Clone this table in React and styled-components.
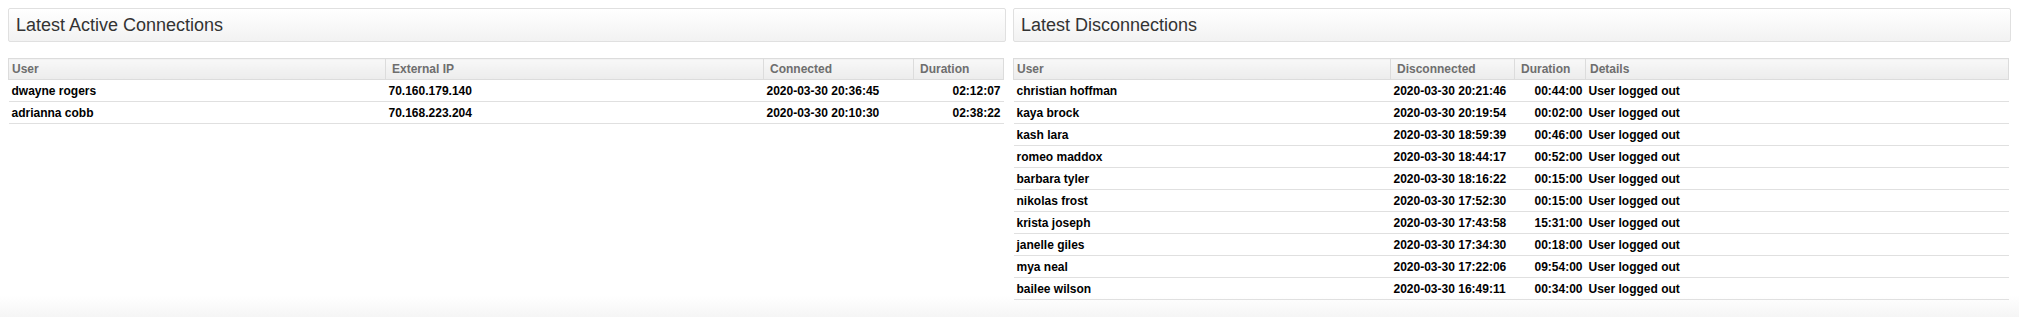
import React from 'react';
import styled, { createGlobalStyle } from 'styled-components';

const active = [
    { user: 'dwayne rogers', ip: '70.160.179.140', connected: '2020-03-30 20:36:45', duration: '02:12:07' },
    { user: 'adrianna cobb', ip: '70.168.223.204', connected: '2020-03-30 20:10:30', duration: '02:38:22' },
];

const disconnections = [
    ['christian hoffman', '2020-03-30 20:21:46', '00:44:00'],
    ['kaya brock', '2020-03-30 20:19:54', '00:02:00'],
    ['kash lara', '2020-03-30 18:59:39', '00:46:00'],
    ['romeo maddox', '2020-03-30 18:44:17', '00:52:00'],
    ['barbara tyler', '2020-03-30 18:16:22', '00:15:00'],
    ['nikolas frost', '2020-03-30 17:52:30', '00:15:00'],
    ['krista joseph', '2020-03-30 17:43:58', '15:31:00'],
    ['janelle giles', '2020-03-30 17:34:30', '00:18:00'],
    ['mya neal', '2020-03-30 17:22:06', '09:54:00'],
    ['bailee wilson', '2020-03-30 16:49:11', '00:34:00'],
];

const App = () => {
    return (
        <>
            <GlobalStyle />
            <Page>
                <Column>
                    <PanelTitle>Latest Active Connections</PanelTitle>
                    <Table>
                        <colgroup>
                            <col style={{ width: 377 }} />
                            <col style={{ width: 378 }} />
                            <col style={{ width: 150 }} />
                            <col />
                        </colgroup>
                        <thead>
                            <tr>
                                <Th>User</Th>
                                <Th>External IP</Th>
                                <Th>Connected</Th>
                                <Th>Duration</Th>
                            </tr>
                        </thead>
                        <tbody>
                            {active.map((r) => (
                                <tr key={r.user}>
                                    <Td>{r.user}</Td>
                                    <Td>{r.ip}</Td>
                                    <Td>{r.connected}</Td>
                                    <Td $right>{r.duration}</Td>
                                </tr>
                            ))}
                        </tbody>
                    </Table>
                </Column>
                <Column>
                    <PanelTitle>Latest Disconnections</PanelTitle>
                    <Table>
                        <colgroup>
                            <col style={{ width: 377 }} />
                            <col style={{ width: 124 }} />
                            <col style={{ width: 71 }} />
                            <col />
                        </colgroup>
                        <thead>
                            <tr>
                                <Th>User</Th>
                                <Th>Disconnected</Th>
                                <Th>Duration</Th>
                                <Th $tight>Details</Th>
                            </tr>
                        </thead>
                        <tbody>
                            {disconnections.map(([user, when, dur]) => (
                                <tr key={user}>
                                    <Td>{user}</Td>
                                    <Td>{when}</Td>
                                    <Td $right>{dur}</Td>
                                    <Td>User logged out</Td>
                                </tr>
                            ))}
                        </tbody>
                    </Table>
                </Column>
            </Page>
        </>
    );
};

export default App;

const GlobalStyle = createGlobalStyle`
    html, body {
        margin: 0;
        padding: 0;
    }
    body {
        min-height: 317px;
        background: linear-gradient(to bottom, #fff 0, #fff 296px, #f5f5f5 317px);
        font-family: "Liberation Sans", Arial, Helvetica, sans-serif;
        color: #000;
    }
`;

const Page = styled.div`
    display: grid;
    grid-template-columns: 1fr 1fr;
    gap: 7px;
    padding: 8px 8px 0 8px;
    align-items: start;
`;

const Column = styled.section`
    display: flex;
    flex-direction: column;
    gap: 16px;
    min-width: 0;
`;

const PanelTitle = styled.h2`
    margin: 0;
    height: 32px;
    line-height: 32px;
    padding: 0 7px;
    font-size: 18px;
    font-weight: normal;
    color: #333;
    border: 1px solid #e0e0e0;
    border-radius: 2px;
    background: linear-gradient(to bottom, #ffffff 0%, #f2f2f2 100%);
`;

const Table = styled.table`
    width: calc(100% - 2px);
    border-collapse: collapse;
    table-layout: fixed;
    font-size: 12px;
`;

const Th = styled.th`
    height: 20px;
    padding: 0 3px 0 ${(p) => (p.$tight ? '4px' : '6px')};
    text-align: left;
    font-weight: bold;
    color: #6e6e6e;
    border: 1px solid #dcdcdc;
    background: linear-gradient(to bottom, #f8f8f8 0%, #ececec 100%);

    &:first-child {
        padding-left: 3px;
    }
`;

const Td = styled.td`
    height: 21px;
    padding: 0 3px;
    text-align: ${(p) => (p.$right ? 'right' : 'left')};
    font-weight: bold;
    color: #000;
    border-bottom: 1px solid #e0e0e0;
    white-space: nowrap;
`;
